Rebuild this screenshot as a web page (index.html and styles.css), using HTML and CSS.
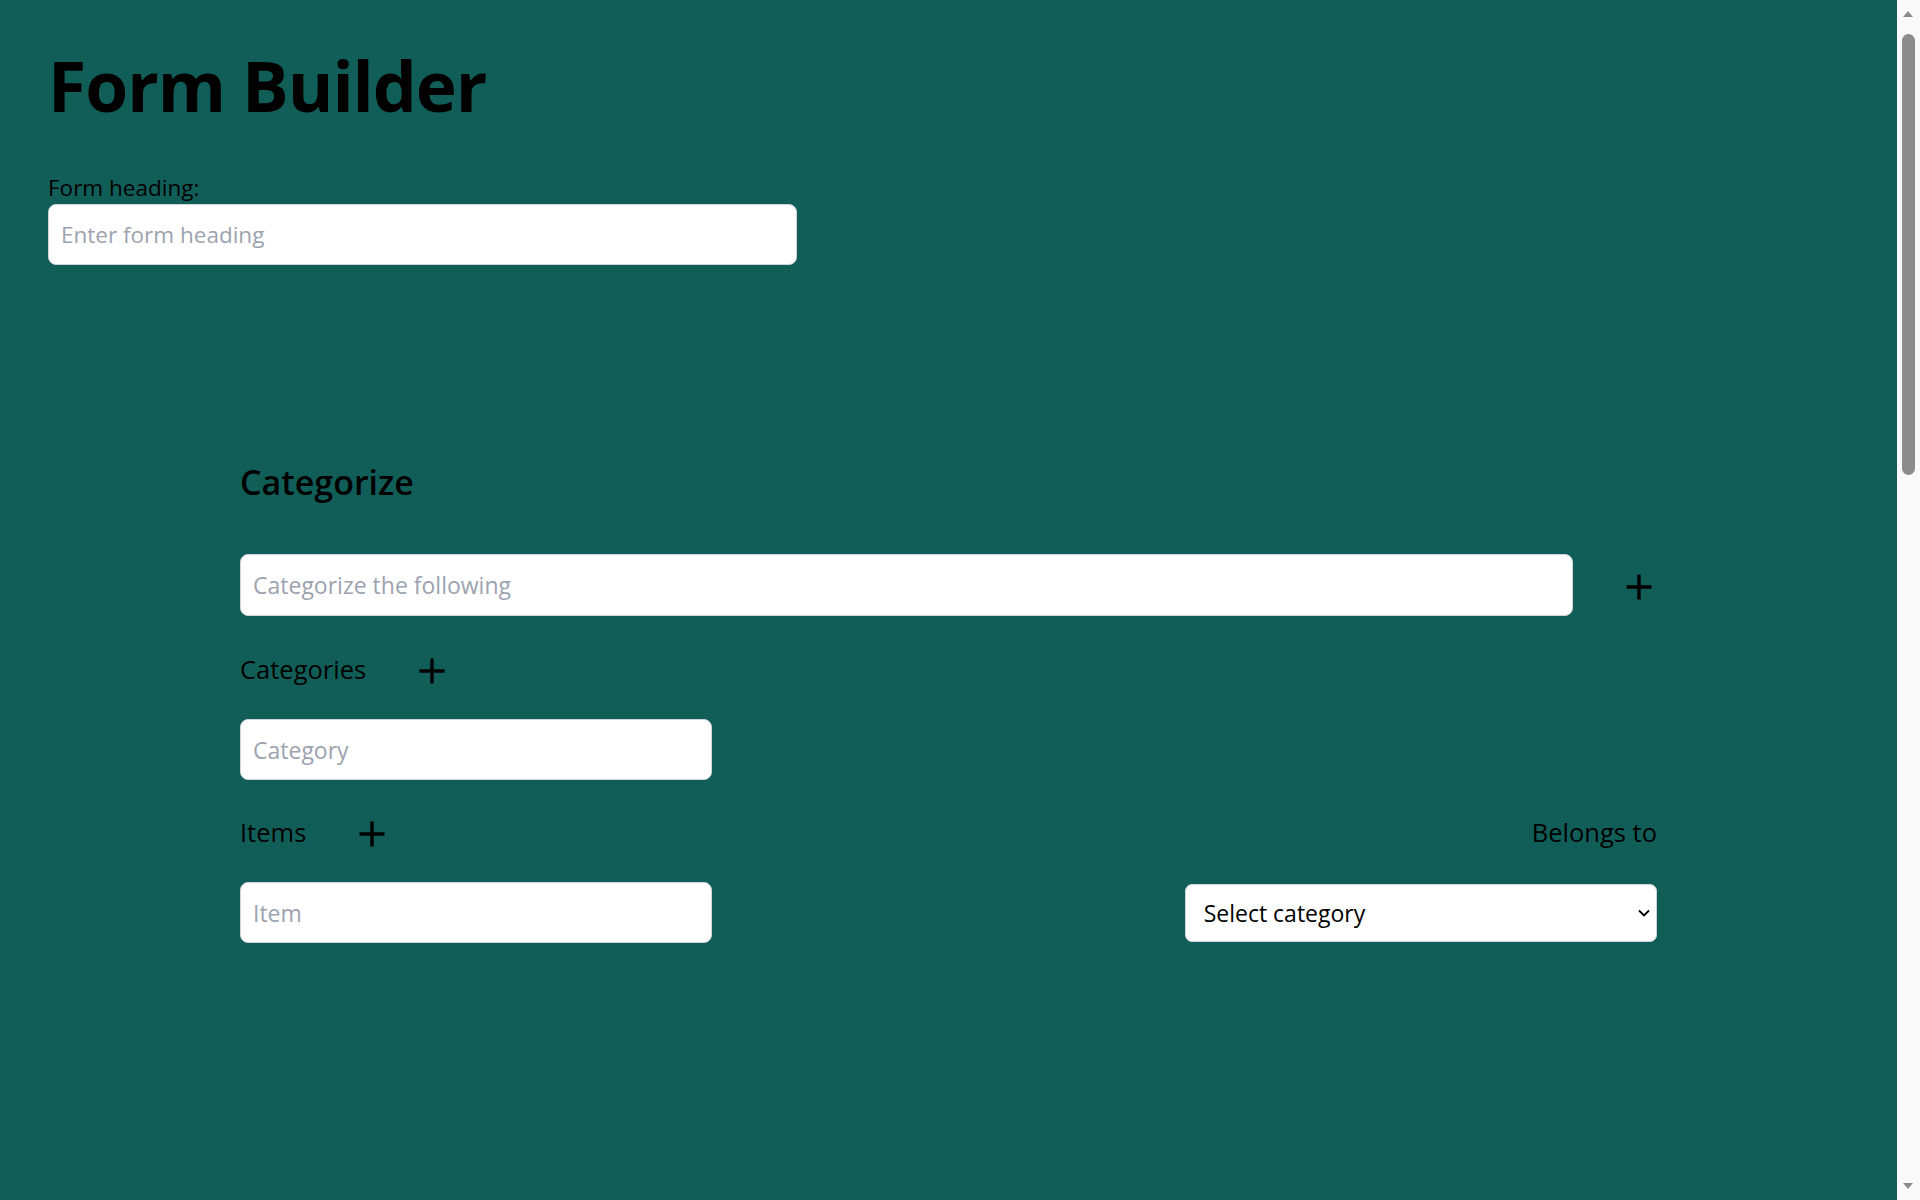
FILE: index.html
```html
<!DOCTYPE html>
<html lang="en">
<head>
<meta charset="utf-8">
<title>Form Builder</title>
<link rel="stylesheet" href="styles.css">
</head>
<body>
<main class="page">
  <h1 class="title">Form Builder</h1>
  <label class="field-label" for="form-heading">Form heading:</label>
  <input id="form-heading" class="text-input heading-input" type="text" placeholder="Enter form heading">

  <section class="question">
    <h2 class="q-title">Categorize</h2>

    <div class="q-row">
      <input class="text-input q-input" type="text" placeholder="Categorize the following">
      <button class="icon-btn" type="button" aria-label="Add question">
        <svg viewBox="0 0 36 36" width="36" height="36"><path d="M18 5.5V30.5M5.5 18H30.5" stroke="#000" stroke-width="3.4" fill="none"/></svg>
      </button>
    </div>

    <div class="sub-head cat-head">
      <span class="sub-label">Categories</span>
      <button class="icon-btn" type="button" aria-label="Add category">
        <svg viewBox="0 0 36 36" width="36" height="36"><path d="M18 5.5V30.5M5.5 18H30.5" stroke="#000" stroke-width="3.4" fill="none"/></svg>
      </button>
    </div>

    <div class="grid3 cat-grid">
      <input class="text-input" type="text" placeholder="Category">
    </div>

    <div class="sub-head items-head">
      <span class="sub-label">Items</span>
      <button class="icon-btn" type="button" aria-label="Add item">
        <svg viewBox="0 0 36 36" width="36" height="36"><path d="M18 5.5V30.5M5.5 18H30.5" stroke="#000" stroke-width="3.4" fill="none"/></svg>
      </button>
      <span class="sub-label belongs">Belongs to</span>
    </div>

    <div class="grid3 item-grid">
      <input class="text-input" type="text" placeholder="Item">
      <div></div>
      <div class="select-wrap">
        <select class="select-input">
          <option>Select category</option>
        </select>
        <svg class="chevron" viewBox="0 0 12 8" width="12" height="8"><path d="M1 1.5L6 6.5L11 1.5" stroke="#000" stroke-width="1.8" fill="none"/></svg>
      </div>
    </div>
  </section>
</main>

<div class="fake-scrollbar" aria-hidden="true">
  <span class="sb-arrow sb-up"></span>
  <span class="sb-thumb"></span>
  <span class="sb-arrow sb-down"></span>
</div>
</body>
</html>
```

FILE: styles.css
```css
* { box-sizing: border-box; }

html, body {
  margin: 0;
  padding: 0;
  background: #115e59;
}

body {
  font-family: "Open Sans", "Noto Sans", "Liberation Sans", sans-serif;
  color: #000;
}

.page {
  padding: 0 71px 0 48px;
  min-height: 3150px;
  overflow: hidden;
}

.title {
  margin: 37px 0 0;
  font-size: 69.5px;
  line-height: 96px;
  font-weight: 700;
  letter-spacing: -1px;
}

.field-label {
  display: block;
  margin-top: 40px;
  font-size: 22.5px;
  line-height: 30px;
}

.text-input {
  display: block;
  width: 100%;
  height: 61px;
  margin: 0;
  padding: 0 12px;
  border: 1px solid #d1d5db;
  border-radius: 8px;
  background: #fff;
  font-family: inherit;
  font-size: 23px;
  color: #000;
  outline: none;
}

.text-input::placeholder {
  color: #9ca3af;
}

.heading-input {
  width: 749px;
  margin-top: 1px;
  font-size: 22.5px;
}

.question {
  margin-top: 195px;
  padding: 0 192px;
}

.q-title {
  margin: 0;
  font-size: 34px;
  line-height: 45px;
  font-weight: 600;
}

.q-row {
  margin-top: 49px;
  display: flex;
  align-items: center;
  gap: 48px;
}

.q-input {
  flex: 1;
  height: 62px;
}

.q-row .icon-btn {
  margin-top: 3px;
}

.icon-btn {
  width: 36px;
  height: 36px;
  padding: 0;
  border: 0;
  background: transparent;
  cursor: pointer;
  flex: none;
}

.icon-btn svg {
  display: block;
}

.sub-head {
  height: 36px;
  display: flex;
  align-items: center;
  gap: 48px;
}

.sub-head .icon-btn {
  margin-top: 4px;
}

.sub-label {
  font-size: 25.5px;
  line-height: 32px;
}

.belongs {
  margin-left: auto;
}

.cat-head {
  margin-top: 35px;
}

.items-head {
  margin-top: 34px;
}

.grid3 {
  display: grid;
  grid-template-columns: repeat(3, 1fr);
  align-items: center;
}

.cat-grid {
  margin-top: 32px;
}

.item-grid {
  margin-top: 32px;
}

.select-wrap {
  position: relative;
}

.select-input {
  display: block;
  height: 58px;
  width: 100%;
  padding: 0 30px 0 18px;
  border: 1px solid #d1d5db;
  border-radius: 7px;
  background: #fff;
  font-family: inherit;
  font-size: 23px;
  color: #000;
  appearance: none;
  -webkit-appearance: none;
}

.chevron {
  position: absolute;
  right: 7px;
  top: 25px;
  pointer-events: none;
}

.fake-scrollbar {
  position: fixed;
  top: 0;
  right: 0;
  bottom: 0;
  width: 23px;
  background: #f9f9f9;
}

.sb-thumb {
  position: absolute;
  top: 34px;
  left: 5px;
  width: 13px;
  height: 441px;
  border-radius: 7px;
  background: #8b8b8b;
}

.sb-arrow {
  position: absolute;
  left: 6px;
  width: 0;
  height: 0;
  border-left: 5.5px solid transparent;
  border-right: 5.5px solid transparent;
}

.sb-up {
  top: 11px;
  border-bottom: 6px solid #8b8b8b;
}

.sb-down {
  bottom: 11px;
  border-top: 6px solid #8b8b8b;
}
```
